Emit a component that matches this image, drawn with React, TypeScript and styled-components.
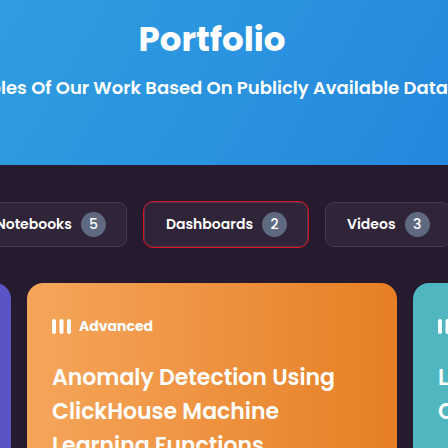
import React from "react";
import styled, { createGlobalStyle } from "styled-components";

const GlobalStyle = createGlobalStyle`
  html, body {
    margin: 0;
    padding: 0;
    background: #261a2e;
    overflow: hidden;
  }
  body {
    font-family: "Poppins", "Open Sans", "Liberation Sans", sans-serif;
    -webkit-font-smoothing: antialiased;
  }
`;

const Page = styled.div`
  width: 448px;
  height: 448px;
  overflow: hidden;
  background: #261a2e;
  color: #fff;
`;

const Hero = styled.header`
  height: 165px;
  background: linear-gradient(120deg, #2f9de0 0%, #2a93df 50%, #2488dd 100%);
  display: flex;
  flex-direction: column;
  align-items: center;
  padding-right: 24px;
  overflow: hidden;
`;

const Title = styled.h1`
  margin: 15px 0 0;
  font-size: 34px;
  font-weight: 700;
  line-height: 48px;
  white-space: nowrap;
`;

const Subtitle = styled.p`
  margin: 11px 0 0;
  font-size: 18px;
  font-weight: 600;
  line-height: 28px;
  white-space: nowrap;
`;

const Body = styled.main`
  width: 424px;
  display: flex;
  flex-direction: column;
  align-items: center;
`;

const Tabs = styled.nav`
  display: flex;
  justify-content: center;
  gap: 17px;
  margin-top: 37px;
  width: 100%;
`;

const Tab = styled.button<{ $focused?: boolean }>`
  flex-shrink: 0;
  height: 45px;
  display: flex;
  align-items: center;
  gap: 9px;
  padding: 0 20px 0 21px;
  border-radius: 9px;
  background: #2f2438;
  border: 1px solid #463a51;
  color: #fff;
  font-family: inherit;
  font-size: 14px;
  font-weight: 600;
  outline: ${(p) => (p.$focused ? "1px solid #e0101e" : "none")};
  outline-offset: 0;
`;

const Badge = styled.span`
  width: 25px;
  height: 25px;
  border-radius: 50%;
  background: #5f6a80;
  display: flex;
  align-items: center;
  justify-content: center;
  font-size: 14px;
  font-weight: 500;
`;

const Cards = styled.section`
  display: flex;
  justify-content: center;
  gap: 16px;
  margin-top: 36px;
  width: 100%;
`;

const Card = styled.article<{ $bg: string }>`
  flex-shrink: 0;
  width: 370px;
  height: 300px;
  border-radius: 16px;
  background: ${(p) => p.$bg};
  padding: 36px 25px;
  box-sizing: border-box;
`;

const Level = styled.div`
  display: flex;
  align-items: center;
  gap: 8px;
  font-size: 14px;
  font-weight: 700;
  height: 14px;
`;

const CardTitle = styled.h2`
  margin: 28px 0 0;
  font-size: 22px;
  font-weight: 600;
  line-height: 34px;
`;

const LevelIcon = () => (
  <svg width="19" height="15" viewBox="0 0 19 15" aria-hidden="true">
    <rect x="0" y="0" width="4" height="15" rx="2" fill="#fff" />
    <rect x="7.5" y="0" width="4" height="15" rx="2" fill="#fff" />
    <rect x="15" y="0" width="4" height="15" rx="2" fill="#fff" />
  </svg>
);

const cards = [
  { bg: "#5a55c6", level: "Intermediate", title: "Building Dashboards With Grafana And ClickHouse" },
  {
    bg: "linear-gradient(90deg, #f5a65b 0%, #ef9443 45%, #e67f24 100%)",
    level: "Advanced",
    title: "Anomaly Detection Using ClickHouse Machine Learning Functions",
  },
  { bg: "#50b7c1", level: "Intermediate", title: "Log Analytics With ClickHouse" },
];

export default function App() {
  return (
    <Page>
      <GlobalStyle />
      <Hero>
        <Title>Portfolio</Title>
        <Subtitle>Examples Of Our Work Based On Publicly Available Datasets</Subtitle>
      </Hero>
      <Body>
        <Tabs>
          <Tab>
            Notebooks <Badge>5</Badge>
          </Tab>
          <Tab $focused>
            Dashboards <Badge>2</Badge>
          </Tab>
          <Tab>
            Videos <Badge>3</Badge>
          </Tab>
        </Tabs>
        <Cards>
          {cards.map((c, i) => (
            <Card key={i} $bg={c.bg}>
              <Level>
                <LevelIcon />
                {c.level}
              </Level>
              <CardTitle>{c.title}</CardTitle>
            </Card>
          ))}
        </Cards>
      </Body>
    </Page>
  );
}
